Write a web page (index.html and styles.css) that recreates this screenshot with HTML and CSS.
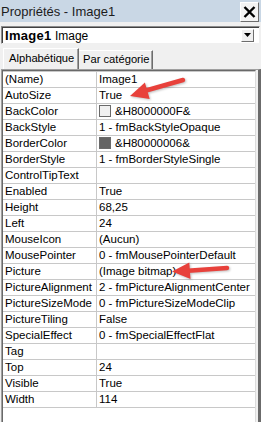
FILE: index.html
```html
<!DOCTYPE html>
<html lang="fr">
<head>
    <meta charset="UTF-8">
    <title>Propriétés - Image1</title>
    <link rel="stylesheet" href="styles.css">
</head>
<body>

    <div class="window">
        <!-- Title bar -->
        <div class="titlebar">
            <span class="title">Propriétés - Image1</span>
            <span class="close">
                <svg width="13" height="12" viewBox="0 0 13 12">
                    <path d="M1.5 1 L11.5 11 M11.5 1 L1.5 11" stroke="#000" stroke-width="2.4" fill="none"/>
                </svg>
            </span>
        </div>

        <!-- Object selector -->
        <div class="selector">
            <span class="obj"><b>Image1</b> Image</span>
            <span class="drop">
                <svg width="7" height="4" viewBox="0 0 7 4"><path d="M0 0 H7 L3.5 4 Z" fill="#000"/></svg>
            </span>
        </div>

        <!-- Tabs -->
        <div class="tabs">
            <div class="tab active">Alphabétique</div>
            <div class="tab">Par catégorie</div>
        </div>

        <!-- Property grid -->
        <div class="grid">
            <div class="grid-inner">
                <table class="props">
                    <tbody>
                        <tr><td class="key">(Name)</td><td>Image1</td></tr>
                        <tr><td class="key">AutoSize</td><td>True</td></tr>
                        <tr><td class="key">BackColor</td><td><span class="swatch light"></span>&amp;H8000000F&amp;</td></tr>
                        <tr><td class="key">BackStyle</td><td>1 - fmBackStyleOpaque</td></tr>
                        <tr><td class="key">BorderColor</td><td><span class="swatch dark"></span>&amp;H80000006&amp;</td></tr>
                        <tr><td class="key">BorderStyle</td><td>1 - fmBorderStyleSingle</td></tr>
                        <tr><td class="key">ControlTipText</td><td></td></tr>
                        <tr><td class="key">Enabled</td><td>True</td></tr>
                        <tr><td class="key">Height</td><td>68,25</td></tr>
                        <tr><td class="key">Left</td><td>24</td></tr>
                        <tr><td class="key">MouseIcon</td><td>(Aucun)</td></tr>
                        <tr><td class="key">MousePointer</td><td>0 - fmMousePointerDefault</td></tr>
                        <tr><td class="key">Picture</td><td>(Image bitmap)</td></tr>
                        <tr><td class="key">PictureAlignment</td><td>2 - fmPictureAlignmentCenter</td></tr>
                        <tr><td class="key">PictureSizeMode</td><td>0 - fmPictureSizeModeClip</td></tr>
                        <tr><td class="key">PictureTiling</td><td>False</td></tr>
                        <tr><td class="key">SpecialEffect</td><td>0 - fmSpecialEffectFlat</td></tr>
                        <tr><td class="key">Tag</td><td></td></tr>
                        <tr><td class="key">Top</td><td>24</td></tr>
                        <tr><td class="key">Visible</td><td>True</td></tr>
                        <tr><td class="key">Width</td><td>114</td></tr>
                    </tbody>
                </table>
            </div>
        </div>

        <!-- Red annotation arrows drawn over the grid -->
        <svg class="arrows" width="261" height="422" viewBox="0 0 261 422">
            <line x1="183" y1="80" x2="146" y2="90.5" stroke="#e8413b" stroke-width="4.5" stroke-linecap="round"/>
            <polygon points="130,96 144.9,82.6 149.7,99" fill="#e8413b"/>
            <line x1="227" y1="268" x2="188" y2="270.8" stroke="#e8413b" stroke-width="4.5" stroke-linecap="round"/>
            <polygon points="172,271.5 189.3,262.6 190.5,279" fill="#e8413b"/>
        </svg>
    </div>

</body>
</html>
```

FILE: styles.css
```css
* {
    box-sizing: border-box;
}

body {
    margin: 0;
    font-family: "Liberation Sans", Arial, sans-serif;
    color: #000;
}

.window {
    position: relative;
    width: 261px;
    height: 422px;
    background-color: #f0f0f0;
    display: flex;
    flex-direction: column;
    overflow: hidden;
}

.titlebar {
    height: 22px;
    background-color: #c9d7e5;
    display: flex;
    align-items: center;
    justify-content: space-between;
    padding-left: 1px;
}

.title {
    font-size: 13px;
    color: #1c1c1c;
}

.close {
    width: 19px;
    height: 20px;
    margin-right: 2px;
    margin-top: 1px;
    background-color: #f3f3f3;
    border: 1px solid;
    border-color: #fff #6d6d6d #6d6d6d #fff;
    display: flex;
    align-items: center;
    justify-content: center;
}

.selector {
    height: 18px;
    margin: 4px 1px 0 1px;
    background-color: #fff;
    border: 1px solid;
    border-color: #8a8a8a #f0f0f0 #f0f0f0 #8a8a8a;
    box-shadow: inset 1px 1px 0 #404040;
    display: flex;
    align-items: center;
    justify-content: space-between;
    padding-left: 3px;
}

.obj {
    font-size: 12px;
}

.obj b {
    font-size: 13px;
    letter-spacing: 0.3px;
}

.drop {
    width: 13px;
    height: 13px;
    margin-right: 5px;
    background-color: #f0f0f0;
    border: 1px solid;
    border-color: #fff #6d6d6d #6d6d6d #fff;
    display: flex;
    align-items: center;
    justify-content: center;
}

.tabs {
    height: 25px;
    display: flex;
    align-items: flex-end;
    padding-left: 3px;
}

.tab {
    height: 19px;
    width: 75px;
    font-size: 11.2px;
    line-height: 17px;
    padding-left: 4px;
    border: 1px solid;
    border-bottom: none;
    border-color: #fff #6d6d6d #fff #fff;
    box-shadow: inset -1px 0 0 #a0a0a0;
    white-space: nowrap;
    overflow: hidden;
}

.tab.active {
    height: 21px;
    width: 76px;
    padding-left: 5px;
    line-height: 19px;
    margin-right: -1px;
    position: relative;
}

.grid {
    flex: 1;
    margin-left: 1px;
    display: flex;
    border-left: 1px solid #a0a0a0;
    border-top: 1px solid #a0a0a0;
    border-right: 3px solid #6b6b6b;
    padding-right: 2px;
}

.grid-inner {
    flex: 1;
    background-color: #fff;
    border-left: 1px solid #696969;
    border-top: 1px solid #696969;
    border-right: 1px solid #dcdcdc;
}

.props {
    width: 100%;
    table-layout: fixed;
    border-collapse: separate;
    border-spacing: 0;
    border-top: 1px solid #c8c8c8;
}

.props td {
    height: 16px;
    padding: 0 0 0 2px;
    font-size: 11.5px;
    line-height: 15px;
    border-bottom: 1px solid #c8c8c8;
    white-space: nowrap;
    overflow: hidden;
}

.props td.key {
    width: 94px;
    border-right: 1px solid #c8c8c8;
}

.swatch {
    display: inline-block;
    width: 12px;
    height: 12px;
    margin-right: 4px;
    vertical-align: -2px;
    border: 1px solid #6a6a6a;
}

.swatch.light {
    background-color: #f0f0f0;
}

.swatch.dark {
    background-color: #646464;
}

.arrows {
    position: absolute;
    top: 0;
    left: 0;
    pointer-events: none;
    filter: drop-shadow(1px 1px 1px rgba(0, 0, 0, 0.25));
}
```
